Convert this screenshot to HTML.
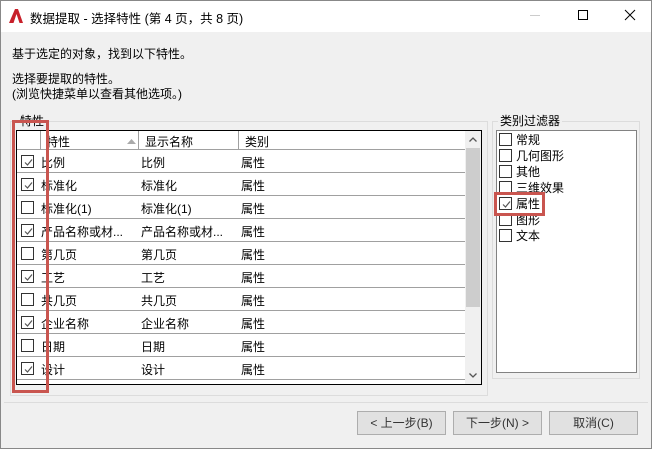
<!DOCTYPE html>
<html><head><meta charset="utf-8"><style>
*{margin:0;padding:0;box-sizing:border-box}
body{width:652px;height:449px;background:#f0f0f0;font-family:"Liberation Sans","Noto Sans CJK SC",sans-serif;font-size:12px;color:#000;position:relative;overflow:hidden}
.a{position:absolute;white-space:nowrap}
.cb{position:absolute;width:13px;height:13px;border:1px solid #333;background:#fff}
.cb svg{position:absolute;left:1px;top:1px}
.row{position:absolute;left:17px;width:448px;height:23px;border-bottom:1px solid #a0a0a0;background:#fff}
.row span{position:absolute;top:4px}
.btn{position:absolute;top:411px;width:89px;height:24px;border:1px solid #adadad;background:#e1e1e1;text-align:center;line-height:22px;font-size:12px;color:#333}
</style></head><body>
<div class="a" style="left:0;top:0;width:652px;height:32px;background:#fff;border:1px solid #888;border-bottom:none"></div>
<div class="a" style="left:0;top:32px;width:652px;height:417px;border:1px solid #888;border-top:none"></div>
<svg class="a" style="left:8px;top:8px" width="16" height="16"><path d="M1 15 L7 1 L10 1 L15 15 L11.5 15 L8.5 6 L5.5 15Z" fill="#c8202a"/></svg>
<div class="a" style="left:30px;top:8px;font-size:12.5px">数据提取 - 选择特性 (第 4 页，共 8 页)</div>
<div class="a" style="left:530px;top:15px;width:10px;height:1px;background:#ccc"></div>
<div class="a" style="left:578px;top:10px;width:10px;height:10px;border:1px solid #000"></div>
<svg class="a" style="left:624px;top:9px" width="12" height="12"><path d="M1 1L11 11M11 1L1 11" stroke="#000" stroke-width="1"/></svg>
<div class="a" style="left:12px;top:45px">基于选定的对象，找到以下特性。</div>
<div class="a" style="left:12px;top:70px">选择要提取的特性。</div>
<div class="a" style="left:12px;top:85px">(浏览快捷菜单以查看其他选项。)</div>
<div class="a" style="left:10px;top:121px;width:478px;height:275px;border:1px solid #dcdcdc"></div>
<div class="a" style="left:18px;top:112px;background:#f0f0f0;padding:0 2px">特性</div>
<div class="a" style="left:16px;top:130px;width:466px;height:255px;border:1px solid #000;background:#fff"></div>
<div class="a" style="left:17px;top:131px;width:448px;height:19px;border-bottom:1px solid #a0a0a0;background:#fff"></div>
<div class="a" style="left:40px;top:131px;width:1px;height:253px;background:#a0a0a0"></div>
<div class="a" style="left:138px;top:131px;width:1px;height:253px;background:#a0a0a0"></div>
<div class="a" style="left:238px;top:131px;width:1px;height:253px;background:#a0a0a0"></div>
<div class="a" style="left:46px;top:133px">特性</div>
<svg class="a" style="left:127px;top:139px" width="9" height="5"><path d="M0 5L4.5 0L9 5Z" fill="#aaa"/></svg>
<div class="a" style="left:145px;top:133px">显示名称</div>
<div class="a" style="left:245px;top:133px">类别</div>
<div id="rows"></div>
<div class="a" style="left:465px;top:131px;width:16px;height:253px;background:#f0f0f0"></div>
<div class="a" style="left:466px;top:148px;width:14px;height:159px;background:#cdcdcd"></div>
<svg class="a" style="left:469px;top:137px" width="8" height="5"><path d="M0.5 4.5L4 1L7.5 4.5" stroke="#555" fill="none" stroke-width="1.3"/></svg>
<svg class="a" style="left:469px;top:373px" width="8" height="5"><path d="M0.5 0.5L4 4L7.5 0.5" stroke="#555" fill="none" stroke-width="1.3"/></svg>
<div class="a" style="left:12px;top:120px;width:37px;height:273px;border:3px solid #c9554f"></div>
<div class="a" style="left:492px;top:121px;width:148px;height:258px;border:1px solid #dcdcdc"></div>
<div class="a" style="left:498px;top:112px;background:#f0f0f0;padding:0 2px">类别过滤器</div>
<div class="a" style="left:496px;top:130px;width:141px;height:243px;border:1px solid #828282;background:#fff"></div>
<div id="cats"></div>
<div class="a" style="left:494px;top:192px;width:51px;height:24px;border:3px solid #c9554f"></div>
<div class="a" style="left:4px;top:402px;width:644px;height:1px;background:#dcdcdc"></div>
<div class="btn" style="left:357px">&lt; 上一步(B)</div>
<div class="btn" style="left:453px">下一步(N) &gt;</div>
<div class="btn" style="left:549px">取消(C)</div>
<script>
var ck='<svg width="11" height="11"><path d="M2 5.5L4.5 8L9 2.5" stroke="#555" fill="none" stroke-width="1.2"/></svg>';
var d=[["比例",1],["标准化",1],["标准化(1)",0],["产品名称或材...",1,"产品名称或材..."],["第几页",0],["工艺",1],["共几页",0],["企业名称",1],["日期",0],["设计",1]];
var h='';
d.forEach(function(r,i){var t=150+i*23;h+='<div class="row" style="top:'+t+'px"><span style="left:24px">'+r[0]+'</span><span style="left:124px">'+(r[2]||r[0])+'</span><span style="left:224px">属性</span></div><div class="cb" style="left:21px;top:'+(t+5)+'px">'+(r[1]?ck:'')+'</div>';});
h+='<div class="row" style="top:380px;height:4px;border:none"></div>';
document.getElementById('rows').innerHTML=h;
var c=[["常规",0],["几何图形",0],["其他",0],["三维效果",0],["属性",1],["图形",0],["文本",0]],g='';
c.forEach(function(r,i){var t=131+i*16;g+='<div class="cb" style="left:499px;top:'+(t+2)+'px">'+(r[1]?ck:'')+'</div><div class="a" style="left:516px;top:'+t+'px">'+r[0]+'</div>';});
document.getElementById('cats').innerHTML=g;
</script>
</body></html>
